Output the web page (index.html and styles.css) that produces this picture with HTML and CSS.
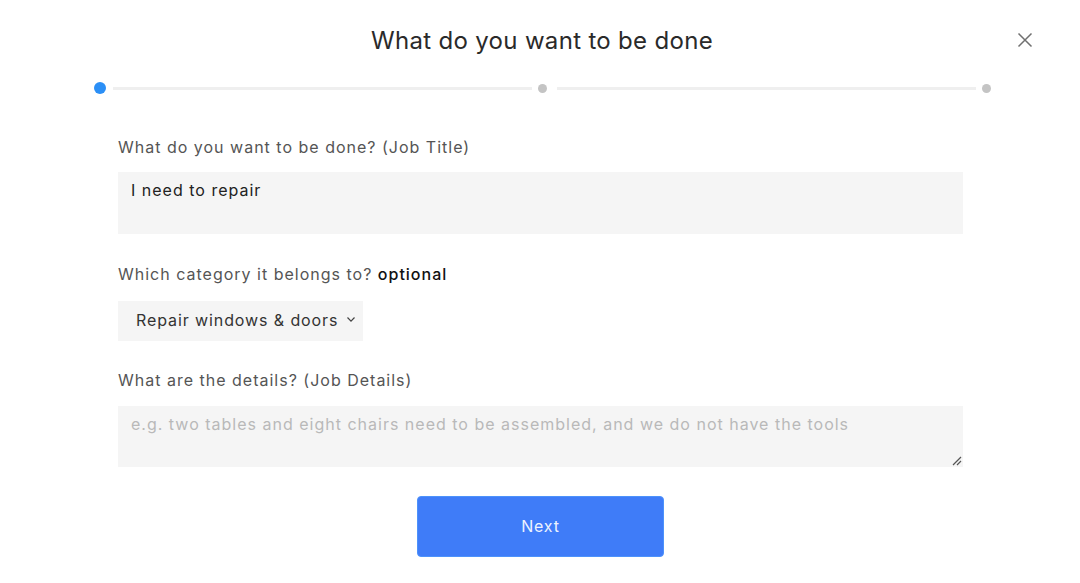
FILE: index.html
```html
<!DOCTYPE html>
<html>
<head>
<meta charset="utf-8">
<link rel="stylesheet" href="styles.css">
</head>
<body>
<div class="modal">
  <header class="header">
    <h1 class="title">What do you want to be done</h1>
    <button class="close" aria-label="Close">
      <svg width="16" height="16" viewBox="0 0 16 16"><path d="M1.5 1.5L14.5 14.5M14.5 1.5L1.5 14.5" stroke="#707070" stroke-width="1.5" fill="none"/></svg>
    </button>
  </header>
  <div class="steps">
    <span class="dot dot-active"></span>
    <span class="line line-first"></span>
    <span class="dot"></span>
    <span class="line"></span>
    <span class="dot"></span>
  </div>
  <form class="form">
    <label class="label">What do you want to be done? (Job Title)</label>
    <div class="input">I need to repair</div>
    <label class="label label-2">Which category it belongs to? <b class="opt">optional</b></label>
    <div class="select">
      <span>Repair windows &amp; doors</span>
      <svg width="10" height="7" viewBox="0 0 10 7"><path d="M1.5 1.5L5 5.2L8.5 1.5" stroke="#444" stroke-width="1.2" fill="none"/></svg>
    </div>
    <label class="label label-3">What are the details? (Job Details)</label>
    <div class="textarea">
      <span class="ph">e.g. two tables and eight chairs need to be assembled, and we do not have the tools</span>
      <svg class="grip" width="12" height="12" viewBox="0 0 12 12"><path d="M11 3L3 11M11 7L7 11" stroke="#555" stroke-width="1.2" fill="none"/></svg>
    </div>
    <div class="actions">
      <button type="button" class="next">Next</button>
    </div>
  </form>
</div>
</body>
</html>
```
FILE: styles.css
```css
* { box-sizing: border-box; }
html, body { margin: 0; padding: 0; background: #fff; }
body {
  font-family: Inter, "Noto Sans", "Liberation Sans", sans-serif;
  color: #333;
  width: 1080px;
  height: 583px;
  overflow: hidden;
}
.modal { position: relative; width: 1080px; }
.header {
  height: 80px;
  display: flex;
  align-items: center;
  justify-content: center;
}
.title {
  margin: 0;
  font-size: 24px;
  font-weight: 400;
  color: #2a2a2a;
  letter-spacing: 0.32px;
  transform: translateX(2px);
}
.close {
  position: absolute;
  top: 32px;
  right: 47px;
  border: 0;
  background: none;
  padding: 0;
  width: 16px;
  height: 16px;
  line-height: 0;
}
.steps {
  display: flex;
  align-items: center;
  margin: 2px 0 0 94px;
  width: 897px;
  height: 12px;
}
.dot {
  width: 9px;
  height: 9px;
  border-radius: 50%;
  background: #c4c4c4;
  flex: none;
}
.dot-active {
  width: 12px;
  height: 12px;
  background: #2b8ff6;
}
.line {
  flex: 1;
  height: 3px;
  background: #efefef;
  margin: 0 6px 0 10px;
}
.line-first { margin-left: 7px; }
.form {
  margin: 43px 0 0 118px;
  width: 845px;
  display: flex;
  flex-direction: column;
}
.label {
  font-size: 16px;
  line-height: 20px;
  color: #555;
  letter-spacing: 1px;
}
.opt { font-weight: 500; color: #111; }
.input {
  margin-top: 15px;
  height: 62px;
  background: #f5f5f5;
  padding: 8px 13px;
  font-size: 16px;
  line-height: 20px;
  color: #222;
  letter-spacing: 1px;
}
.label-2 { margin-top: 30px; }
.select {
  margin-top: 17px;
  width: 245px;
  height: 40px;
  background: #f5f5f5;
  display: flex;
  align-items: center;
  justify-content: space-between;
  padding: 0 7px 3px 18px;
  font-size: 16px;
  color: #333;
  letter-spacing: 0.9px;
}
.label-3 { margin-top: 29px; }
.textarea {
  position: relative;
  margin-top: 16px;
  height: 61px;
  background: #f5f5f5;
  padding: 8px 13px;
  font-size: 16px;
  line-height: 20px;
  letter-spacing: 1px;
}
.ph { color: #b9b9b9; }
.grip { position: absolute; right: 1px; bottom: 1px; }
.actions {
  display: flex;
  justify-content: center;
  margin-top: 29px;
}
.next {
  width: 247px;
  height: 61px;
  border: 1px solid #4d92fb;
  border-radius: 4px;
  background: #3f7cf8;
  color: #eef3ff;
  font-family: Inter, "Noto Sans", sans-serif;
  font-size: 16px;
  letter-spacing: 0.8px;
  padding-bottom: 2px;
}
```
